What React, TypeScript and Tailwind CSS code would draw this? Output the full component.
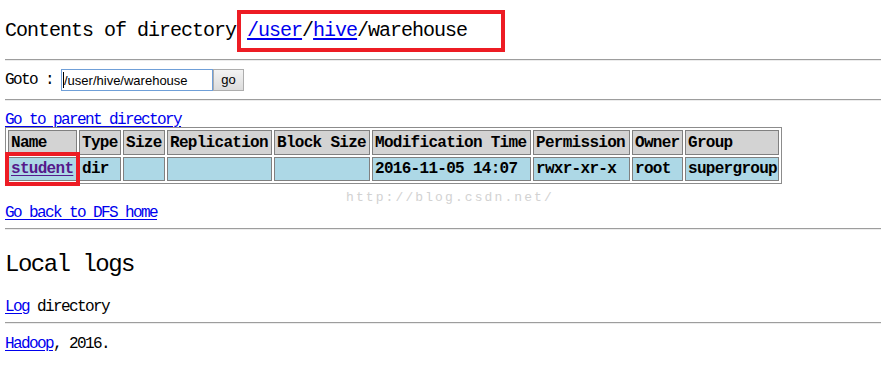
import React from "react";

const link = "text-[#0000ee] underline underline-offset-[2px]";

function Rule() {
  return <div className="h-[2px] w-[876px] border-t border-t-[#9d9d9d] border-b border-b-[#ececec]" />;
}

const headers = [
  { label: "Name", w: "w-[69px]" },
  { label: "Type", w: "w-[42px]" },
  { label: "Size", w: "w-[42px]" },
  { label: "Replication", w: "w-[105px]" },
  { label: "Block Size", w: "w-[96px]" },
  { label: "Modification Time", w: "w-[159px]" },
  { label: "Permission", w: "w-[97px]" },
  { label: "Owner", w: "w-[51px]" },
  { label: "Group", w: "w-[94px]" },
];

const row = ["dir", "", "", "", "2016-11-05 14:07", "rwxr-xr-x", "root", "supergroup"];

export default function App() {
  return (
    <div className="relative w-[881px] h-[372px] overflow-hidden bg-white pl-[5px] text-black font-['Liberation_Mono',monospace] text-[16px] tracking-[-1.6px]">
      {/* heading */}
      <div className="flex items-center pt-[10px]">
        <span className="text-[20px] tracking-[-1px] leading-[36px]">Contents of directory</span>
        <div className="ml-[1px] flex items-center w-[268px] h-[42px] border-4 border-[#ed1c24] pl-[6px] text-[20px] tracking-[-1px] leading-[36px]">
          <a className={link}>/user</a>/<a className={link}>hive</a>/warehouse
        </div>
      </div>
      <div className="mt-[7px]">
        <Rule />
      </div>

      {/* goto */}
      <div className="mt-[8px] flex items-center h-[22px]">
        <span className="w-[56px] leading-[24px]">Goto :</span>
        <div className="relative">
          <input
            readOnly
            value="/user/hive/warehouse"
            className="block w-[152px] h-[22px] border border-[#6f9fd8] pl-[2px] font-['Liberation_Sans',Arial,sans-serif] text-[13px] tracking-normal outline-none"
          />
          <span className="absolute left-[2px] top-[3px] h-[16px] w-px bg-black" />
        </div>
        <button className="w-[31px] h-[22px] border border-[#adadad] bg-gradient-to-b from-[#f3f3f3] to-[#dcdcdc] font-['Liberation_Sans',Arial,sans-serif] text-[13px] tracking-normal leading-[20px]">
          go
        </button>
      </div>
      <div className="mt-[8px]">
        <Rule />
      </div>

      <div className="mt-[11px] h-[15px] leading-[17px]">
        <a className={link}>Go to parent directory</a>
      </div>

      {/* listing */}
      <div className="relative">
        <table className="w-[777px] table-fixed border-separate border-spacing-[2px] border border-[#8c8c8c] font-bold text-[16px] tracking-[-0.7px] leading-[20px]">
          <thead>
            <tr className="h-[25px]">
              {headers.map((h) => (
                <th key={h.label} className={`${h.w} bg-[#d3d3d3] border border-[#808080] px-[2px] py-0 text-left font-bold whitespace-nowrap`}>
                  {h.label}
                </th>
              ))}
            </tr>
          </thead>
          <tbody>
            <tr className="h-[24px]">
              <td className="bg-[#add8e6] border border-[#808080] px-[2px] py-0">
                <a className="text-[#551a8b] underline underline-offset-[2px]">student</a>
              </td>
              {row.map((c, i) => (
                <td key={i} className="bg-[#add8e6] border border-[#808080] px-[2px] py-0 whitespace-nowrap">
                  {c}
                </td>
              ))}
            </tr>
          </tbody>
        </table>
        <div className="pointer-events-none absolute left-0 top-[25px] w-[75px] h-[34px] border-4 border-[#ed1c24]" />
      </div>

      <div className="mt-[21px] h-[15px] leading-[17px]">
        <a className={link}>Go back to DFS home</a>
      </div>
      <div className="mt-[8px]">
        <Rule />
      </div>

      <h2 className="mt-[20px] text-[24px] tracking-[-1.5px] leading-[30px] font-normal">Local logs</h2>

      <div className="mt-[19px] h-[15px] leading-[17px]">
        <a className={link}>Log</a> directory
      </div>
      <div className="mt-[8px]">
        <Rule />
      </div>

      <div className="mt-[12px] h-[15px] leading-[17px]">
        <a className={link}>Hadoop</a>, 2016.
      </div>

      {/* watermark */}
      <div className="pointer-events-none absolute left-[346px] top-[191px] text-[13px] tracking-[2.1px] leading-[13px] text-[#d2d2d2]">
        http://blog.csdn.net/
      </div>
    </div>
  );
}
